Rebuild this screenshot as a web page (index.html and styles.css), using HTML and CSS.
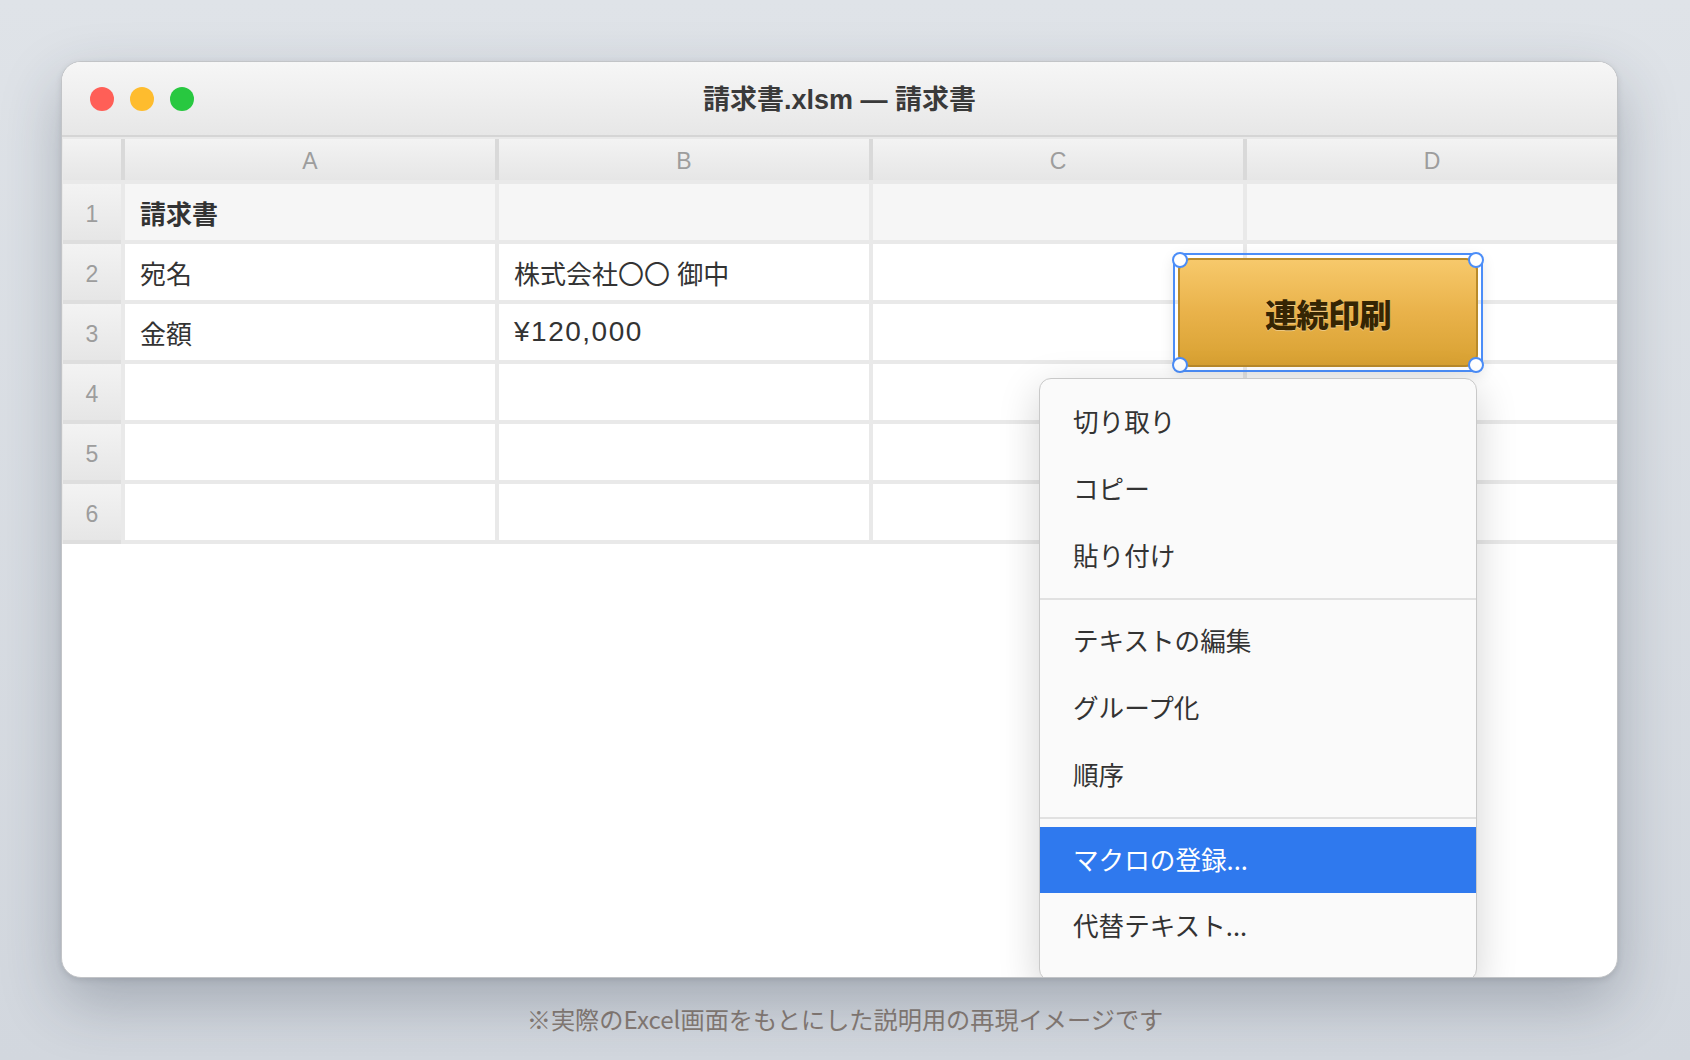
FILE: index.html
```html
<!DOCTYPE html>
<html lang="ja">
  <head>
    <meta charset="UTF-8" />
    <meta name="viewport" content="width=device-width, initial-scale=1.0" />
    <title>請求書.xlsm — 請求書</title>
    <link rel="stylesheet" href="styles.css">
  </head>
  <body>
    <div class="window">
      <div class="titlebar">
        <div class="lights">
          <span class="light red"></span>
          <span class="light yellow"></span>
          <span class="light green"></span>
        </div>
        <div class="title">請求書.xlsm — 請求書</div>
        <div></div>
      </div>

      <div class="sheet">
        <div class="corner"></div>
        <div class="col-head">A</div>
        <div class="col-head">B</div>
        <div class="col-head">C</div>
        <div class="col-head">D</div>

        <div class="row-head">1</div>
        <div class="cell shaded bold">請求書</div>
        <div class="cell shaded"></div>
        <div class="cell shaded"></div>
        <div class="cell shaded"></div>

        <div class="row-head">2</div>
        <div class="cell">宛名</div>
        <div class="cell">株式会社〇〇 御中</div>
        <div class="cell"></div>
        <div class="cell"></div>

        <div class="row-head">3</div>
        <div class="cell">金額</div>
        <div class="cell amount">¥120,000</div>
        <div class="cell"></div>
        <div class="cell"></div>

        <div class="row-head">4</div>
        <div class="cell"></div>
        <div class="cell"></div>
        <div class="cell"></div>
        <div class="cell"></div>

        <div class="row-head">5</div>
        <div class="cell"></div>
        <div class="cell"></div>
        <div class="cell"></div>
        <div class="cell"></div>

        <div class="row-head">6</div>
        <div class="cell"></div>
        <div class="cell"></div>
        <div class="cell"></div>
        <div class="cell"></div>
      </div>

      <!-- selected form button -->
      <div class="shape-selection">
        <div class="macro-button">連続印刷</div>
        <span class="handle tl"></span>
        <span class="handle tr"></span>
        <span class="handle bl"></span>
        <span class="handle br"></span>
      </div>

      <!-- right click menu -->
      <div class="context-menu">
        <div class="menu-item">切り取り</div>
        <div class="menu-item">コピー</div>
        <div class="menu-item">貼り付け</div>
        <div class="menu-sep"></div>
        <div class="menu-item">テキストの編集</div>
        <div class="menu-item">グループ化</div>
        <div class="menu-item">順序</div>
        <div class="menu-sep"></div>
        <div class="menu-item active">マクロの登録...</div>
        <div class="menu-item">代替テキスト...</div>
      </div>
    </div>

    <p class="note">※実際のExcel画面をもとにした説明用の再現イメージです</p>
  </body>
</html>
```

FILE: styles.css
```css
* {
  box-sizing: border-box;
}

body {
  margin: 0;
  height: 1060px;
  overflow: hidden;
  background: linear-gradient(180deg, #dfe3e8 0%, #d2d7de 100%);
  font-family: "Liberation Sans", "Noto Sans CJK JP", sans-serif;
  color: #333;
}

.window {
  position: relative;
  width: 1557px;
  height: 917px;
  margin: 61px 0 0 61px;
  background: #fff;
  border: 1px solid #c2c4c7;
  border-radius: 20px;
  overflow: hidden;
  box-shadow: 0 24px 60px rgba(40, 50, 70, 0.28), 0 2px 6px rgba(0, 0, 0, 0.1);
}

/* title bar */

.titlebar {
  display: grid;
  grid-template-columns: 1fr auto 1fr;
  align-items: center;
  height: 75px;
  padding: 0 28px;
  background: linear-gradient(180deg, #f6f6f6 0%, #e7e7e7 100%);
  border-bottom: 2px solid #d5d5d5;
}

.lights {
  display: flex;
  gap: 16px;
}

.light {
  width: 24px;
  height: 24px;
  border-radius: 50%;
}

.red {
  background-color: #ff5f57;
}

.yellow {
  background-color: #febc2e;
}

.green {
  background-color: #28c840;
}

.title {
  padding-bottom: 2px;
  font-family: "Liberation Sans", "Noto Sans CJK JP", sans-serif;
  font-size: 27px;
  font-weight: 700;
  color: #3a3a3a;
}

/* sheet grid */

.sheet {
  display: grid;
  grid-template-columns: 58px repeat(4, 1fr);
  grid-template-rows: 41px repeat(6, 56px);
  gap: 4px;
  padding: 2px 0 4px 1px;
  background-color: #e9e9e9;
}

.corner,
.col-head,
.row-head {
  display: flex;
  justify-content: center;
  align-items: center;
  padding-top: 4px;
  background: linear-gradient(180deg, #f3f3f3 0%, #e6e6e6 100%);
  color: #9d9d9d;
  font-size: 23px;
}

.corner,
.col-head {
  box-shadow: 4px 0 0 #d9d9d9;
}

.row-head {
  box-shadow: 0 4px 0 #dedede;
}

.cell {
  display: flex;
  align-items: center;
  padding-left: 15px;
  background-color: #fff;
  font-size: 26px;
  color: #333;
}

.cell.shaded {
  background-color: #f6f6f6;
}

.cell.bold {
  font-weight: 700;
}

.cell.amount {
  font-size: 28px;
  letter-spacing: 1.5px;
}

/* form button with selection handles */

.shape-selection {
  position: absolute;
  left: 1111px;
  top: 191px;
  width: 310px;
  height: 119px;
  padding: 3px;
  border: 2px solid #4b8df8;
  border-radius: 8px;
  box-shadow: 0 4px 14px rgba(0, 0, 0, 0.1);
}

.macro-button {
  display: flex;
  justify-content: center;
  align-items: center;
  height: 100%;
  background: linear-gradient(180deg, #f7c96b 0%, #e9b24a 50%, #d8a132 100%);
  border: 2px solid #b98a2a;
  border-radius: 12px;
  font-family: "Noto Sans CJK JP", sans-serif;
  font-size: 32px;
  font-weight: 900;
  color: #352503;
  text-shadow: 0 1px 0 rgba(255, 255, 255, 0.35);
  letter-spacing: -0.5px;
}

.handle {
  position: absolute;
  width: 16px;
  height: 16px;
  background-color: #fff;
  border: 2.5px solid #4b8df8;
  border-radius: 50%;
}

.handle.tl {
  top: -3px;
  left: -3px;
}

.handle.tr {
  top: -3px;
  right: -3px;
}

.handle.bl {
  bottom: -3px;
  left: -3px;
}

.handle.br {
  bottom: -3px;
  right: -3px;
}

/* context menu */

.context-menu {
  position: absolute;
  left: 977px;
  top: 316px;
  width: 438px;
  padding: 10px 0 20px;
  background-color: #fafafa;
  border: 1px solid #c9c9c9;
  border-radius: 12px;
  box-shadow: 0 12px 40px rgba(0, 0, 0, 0.18);
}

.menu-item {
  display: flex;
  align-items: center;
  height: 67px;
  padding-left: 33px;
  padding-bottom: 4px;
  font-family: "Noto Sans CJK JP", sans-serif;
  font-size: 25.6px;
  color: #333;
}

.menu-item.active {
  height: 66px;
  background-color: #2f79ee;
  color: #fff;
}

.menu-sep {
  height: 2px;
  margin: 8px 0;
  background-color: #e1e1e1;
}

/* caption under window */

.note {
  margin: 25px 0 0;
  text-align: center;
  font-family: "Noto Sans CJK JP", sans-serif;
  font-size: 24.2px;
  line-height: 32px;
  color: #867b74;
}
```
